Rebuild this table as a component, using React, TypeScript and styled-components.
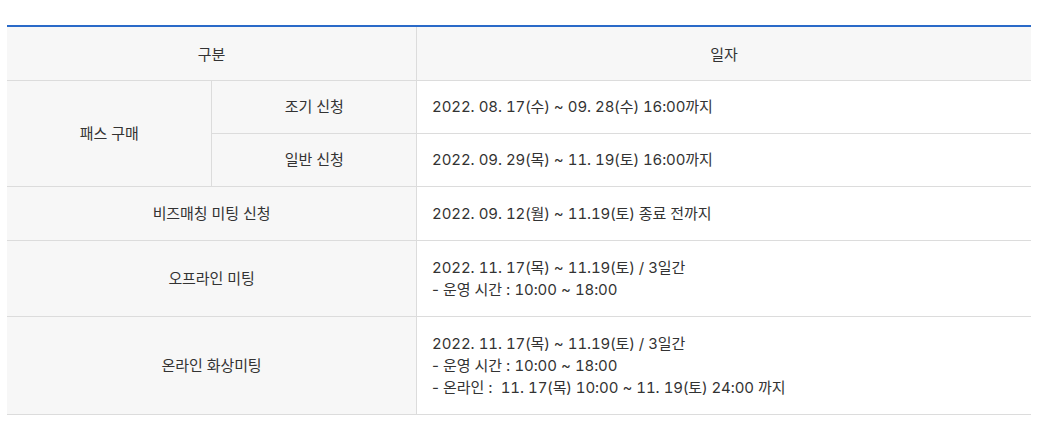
import React from "react";
import styled, { createGlobalStyle } from "styled-components";

const Global = createGlobalStyle`
  html, body { margin: 0; padding: 0; background: #fff; }
  body { font-family: Inter, "Noto Sans CJK KR", "Noto Sans", sans-serif; }
`;

const Page = styled.div`
  padding: 25px 9px 0 7px;
`;

const Table = styled.table`
  width: 1024px;
  border-collapse: collapse;
  table-layout: fixed;
  border-top: 2px solid #2a6ac8;
  font-size: 15px;
  color: #333;
  letter-spacing: -0.1px;
`;

const Th = styled.th`
  background: #f7f7f7;
  font-weight: 400;
  height: 53px;
  padding: 0;
  text-align: center;
  border-bottom: 1px solid #dcdcdc;
  border-left: 1px solid #dcdcdc;
  &:first-child { border-left: none; }
`;

const Head = styled.td<{ $edge?: boolean; $compact?: boolean }>`
  background: #f7f7f7;
  text-align: center;
  padding: ${(p) => (p.$compact ? "15px 10px" : "16px 10px 15px")};
  line-height: 22px;
  border-bottom: 1px solid #dcdcdc;
  border-left: ${(p) => (p.$edge ? "none" : "1px solid #dcdcdc")};
`;

const Cell = styled.td<{ $compact?: boolean }>`
  background: #fff;
  text-align: left;
  padding: ${(p) => (p.$compact ? "15px 15px" : "16px 15px 15px")};
  line-height: 22px;
  border-bottom: 1px solid #dcdcdc;
  border-left: 1px solid #dcdcdc;
`;

const Line = styled.div``;

const Num = styled.span`
  font-variant-numeric: tabular-nums;
`;

function T({ children }: { children: string }) {
  const parts = children.split(/(\d[\d.:]*)/);
  return (
    <>
      {parts.map((p, i) => (i % 2 === 1 ? <Num key={i}>{p}</Num> : <React.Fragment key={i}>{p}</React.Fragment>))}
    </>
  );
}

export default function App() {
  return (
    <>
      <Global />
      <Page>
        <Table>
          <colgroup>
            <col style={{ width: "20%" }} />
            <col style={{ width: "20%" }} />
            <col style={{ width: "60%" }} />
          </colgroup>
          <thead>
            <tr>
              <Th colSpan={2}>구분</Th>
              <Th>일자</Th>
            </tr>
          </thead>
          <tbody>
            <tr>
              <Head rowSpan={2} $edge $compact>패스 구매</Head>
              <Head $compact>조기 신청</Head>
              <Cell $compact><T>2022. 08. 17(수) ~ 09. 28(수) 16:00까지</T></Cell>
            </tr>
            <tr>
              <Head $compact>일반 신청</Head>
              <Cell $compact><T>2022. 09. 29(목) ~ 11. 19(토) 16:00까지</T></Cell>
            </tr>
            <tr>
              <Head colSpan={2} $edge>비즈매칭 미팅 신청</Head>
              <Cell><T>2022. 09. 12(월) ~ 11.19(토) 종료 전까지</T></Cell>
            </tr>
            <tr>
              <Head colSpan={2} $edge>오프라인 미팅</Head>
              <Cell>
                <Line><T>2022. 11. 17(목) ~ 11.19(토) / 3일간</T></Line>
                <Line><T>- 운영 시간 : 10:00 ~ 18:00</T></Line>
              </Cell>
            </tr>
            <tr>
              <Head colSpan={2} $edge>온라인 화상미팅</Head>
              <Cell>
                <Line><T>2022. 11. 17(목) ~ 11.19(토) / 3일간</T></Line>
                <Line><T>- 운영 시간 : 10:00 ~ 18:00</T></Line>
                <Line><T>{"- 온라인 :\u00a0 11. 17(목) 10:00 ~ 11. 19(토) 24:00 까지"}</T></Line>
              </Cell>
            </tr>
          </tbody>
        </Table>
      </Page>
    </>
  );
}
